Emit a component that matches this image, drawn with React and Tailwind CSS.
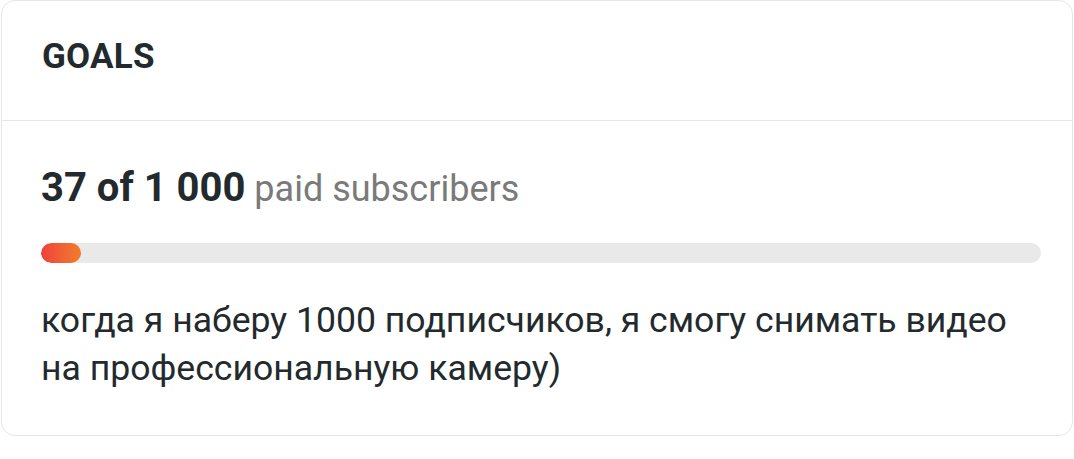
export default function App() {
  return (
    <div className="w-[1074px] h-[459px] bg-white" style={{ fontFamily: "Roboto, 'Noto Sans', sans-serif" }}>
      <div className="ml-px w-[1072px] rounded-[14px] border border-[#e6e6e6] bg-white">
        <div className="h-[120px] flex items-center px-[40px] pb-[9px] border-b border-[#e6e6e6]">
          <h2 className="text-[35px] leading-none font-bold text-[#222a2d] tracking-[0.2px]">GOALS</h2>
        </div>
        <div className="px-[39px] pt-[43px] pb-[43px]">
          <div className="text-[36px] leading-[48px] h-[48px] text-[#222a2d] whitespace-nowrap">
            <span className="text-[40px] font-bold">37 of 1 000</span>{" "}
            <span className="text-[#7a7a7a]">paid subscribers</span>
          </div>
          <div className="mt-[31px] h-[20px] rounded-full bg-[#e9e9e9] overflow-hidden mr-[-8px]">
            <div className="h-full w-[40px] rounded-full bg-gradient-to-r from-[#ee3f3a] to-[#f27c2c]" />
          </div>
          <p className="mt-[33px] text-[35.6px] leading-[48px] text-[#222a2d]">
            когда я наберу 1000 подписчиков, я смогу снимать видео на профессиональную камеру)
          </p>
        </div>
      </div>
    </div>
  );
}
